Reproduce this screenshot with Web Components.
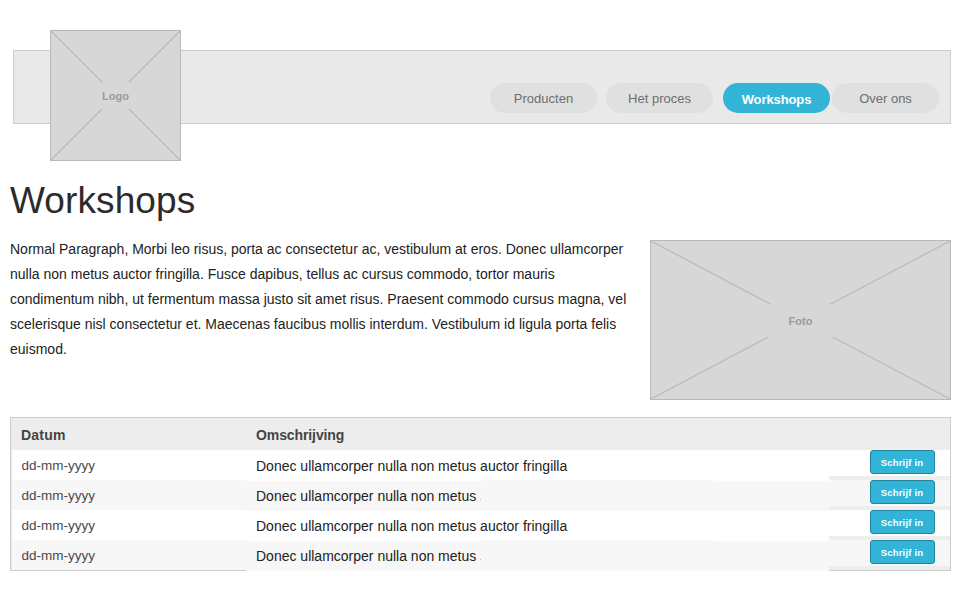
<!DOCTYPE html>
<html lang="nl">
<head>
<meta charset="utf-8">
<title>Workshops</title>
<style>
body { margin: 0; background: #fff; font-family: "Liberation Sans", Arial, sans-serif; }
</style>
</head>
<body>
<workshop-page></workshop-page>

<script>
class BaseElement extends HTMLElement {
  constructor() {
    super();
    this.attachShadow({ mode: "open" });
    const t = document.createElement("template");
    t.innerHTML = this.view();
    this.shadowRoot.append(t.content.cloneNode(true));
  }
  view() { return ""; }
}

/* Crossed box standing in for an image, with a centred label */
customElements.define("image-placeholder", class extends HTMLElement {
  connectedCallback() {
    const w = +this.getAttribute("w"), h = +this.getAttribute("h");
    const top = +this.getAttribute("gap-top"), bottom = +this.getAttribute("gap-bottom");
    this.attachShadow({ mode: "open" }).innerHTML = `
      <style>
        :host { display: grid; width: ${w}px; height: ${h}px; flex: none; }
        svg, span { grid-area: 1 / 1; }
        svg { display: block; }
        span { place-self: center; font: bold 11px/13px "Liberation Sans", Arial, sans-serif;
               color: #9b9b9b; padding-top: 2px; }
      </style>
      <svg width="${w}" height="${h}" fill="none" stroke="#b9b9b9">
        <rect x=".5" y=".5" width="${w - 1}" height="${h - 1}" fill="#d7d7d7"/>
        <path stroke-width="1.2" d="M1 1L${w - 1} ${h - 1}M${w - 1} 1L1 ${h - 1}"/>
        <rect x="${w * 0.35}" y="${top}" width="${w * 0.3}" height="${bottom - top}" fill="#d7d7d7" stroke="none"/>
      </svg>
      <span><slot></slot></span>`;
  }
});

customElements.define("nav-pill", class extends BaseElement {
  view() {
    return `<style>
      :host { display: flex; align-items: center; justify-content: center; box-sizing: border-box;
              width: 107px; height: 30px; border-radius: 15px; background: #e0e0e0; color: #6e6e6e;
              font-size: 13px; line-height: 16px; padding-top: 2px; }
      :host([active]) { background: #31b4d6; color: #fff; font-weight: bold; letter-spacing: -.1px;
              padding-top: 4px; }
    </style><slot></slot>`;
  }
});

customElements.define("site-header", class extends BaseElement {
  view() {
    return `<style>
      :host { display: flex; box-sizing: border-box; height: 74px; margin: 50px 9px 0 13px;
              border: 1px solid #cdcdcd; background: #e9e9e9; }
      .logo { margin: -21px 0 0 36px; height: 131px; }
      nav { display: flex; align-items: flex-start; margin: 32.4px 11px 0 auto; }
      .b { margin-left: 9px; } .c { margin-left: 10px; } .d { margin-left: 2px; }
    </style>
    <div class="logo"><image-placeholder w="131" h="131" gap-top="52" gap-bottom="79">Logo</image-placeholder></div>
    <nav>
      <nav-pill>Producten</nav-pill>
      <nav-pill class="b">Het proces</nav-pill>
      <nav-pill class="c" active>Workshops</nav-pill>
      <nav-pill class="d">Over ons</nav-pill>
    </nav>`;
  }
});

customElements.define("sign-up-button", class extends BaseElement {
  view() {
    return `<style>
      :host { display: block; box-sizing: border-box; width: 65px; height: 24px; border: 1px solid #20869f;
              border-radius: 3px; background: #31b4d6; color: #fff; text-align: center; padding-right: 1px;
              font: bold 9.5px/23px "Liberation Sans", Arial, sans-serif; letter-spacing: .2px; }
    </style><slot></slot>`;
  }
});

customElements.define("workshop-row", class extends BaseElement {
  view() {
    return `<style>
      :host { display: grid; grid-template: 30px / 235px 583px 121px; height: 30px; --bg: #fff; }
      :host([alt]) { --bg: #f7f7f7; }
      .date { margin-left: 1px; padding-left: 9.5px; background: var(--bg); color: #4a4a4a;
              font-size: 13.5px; line-height: 31px; }
      .desc { height: 31px; padding-left: 10px; color: #222; font-size: 14px; line-height: 33px;
              background: linear-gradient(var(--bg), var(--bg)) 0 1px / 100% 30px no-repeat; }
      :host([first]) .desc { background: var(--bg); }
      :host([alt]) .desc { background:
              linear-gradient(#f7f7f7, #f7f7f7) 235px 0 / 234px 1px no-repeat,
              linear-gradient(#bbb, #bbb) 234px 19px / 1px 1px no-repeat,
              linear-gradient(#fff, #fff) 0 0 / 100% 1px no-repeat, #f7f7f7; }
      .action { height: 26px; background: var(--bg); padding-left: 41px; }
    </style>
    <div class="date"><slot name="date"></slot></div>
    <div class="desc"><slot></slot></div>
    <div class="action"><sign-up-button>Schrijf in</sign-up-button></div>`;
  }
});

customElements.define("workshop-table", class extends BaseElement {
  view() {
    return `<style>
      :host { display: block; box-sizing: border-box; width: 941px; height: 154px;
              border: 1px solid #cdcdcd; background: #ededed; }
      header { display: grid; grid-template-columns: 235px 1fr; height: 32px;
               font-weight: bold; font-size: 14px; line-height: 34px; color: #444; }
      header span { padding-left: 10px; }
      .d { letter-spacing: .2px; }
      .o { letter-spacing: -.1px; }
    </style>
    <header><span class="d">Datum</span><span class="o">Omschrijving</span></header>
    <slot></slot>`;
  }
});

customElements.define("workshop-page", class extends BaseElement {
  view() {
    return `<style>
      :host { display: flow-root; width: 960px; height: 594px; overflow: hidden; }
      h1 { margin: 56px 0 0 10px; font-size: 37px; font-weight: normal; line-height: 42px;
           letter-spacing: .1px; color: #2b2b2b; }
      .intro { display: flex; justify-content: space-between; margin: 18px 9px 0 10px; height: 160px; }
      p { margin: -3px 0 0; font-size: 14px; line-height: 25px; color: #222; white-space: nowrap; }
      workshop-table { margin: 17px 0 0 10px; }
    </style>
    <site-header></site-header>
    <h1>Workshops</h1>
    <section class="intro">
      <p>Normal Paragraph, Morbi leo risus, porta ac consectetur ac, vestibulum at eros. Donec ullamcorper<br>
      nulla non metus auctor fringilla. Fusce dapibus, tellus ac cursus commodo, tortor mauris<br>
      condimentum nibh, ut fermentum massa justo sit amet risus. Praesent commodo cursus magna, vel<br>
      scelerisque nisl consectetur et. Maecenas faucibus mollis interdum. Vestibulum id ligula porta felis<br>
      euismod.</p>
      <image-placeholder w="301" h="160" gap-top="64" gap-bottom="97">Foto</image-placeholder>
    </section>
    <workshop-table>
      <workshop-row first><span slot="date">dd-mm-yyyy</span>Donec ullamcorper nulla non metus auctor fringilla</workshop-row>
      <workshop-row alt><span slot="date">dd-mm-yyyy</span>Donec ullamcorper nulla non metus</workshop-row>
      <workshop-row><span slot="date">dd-mm-yyyy</span>Donec ullamcorper nulla non metus auctor fringilla</workshop-row>
      <workshop-row alt><span slot="date">dd-mm-yyyy</span>Donec ullamcorper nulla non metus</workshop-row>
    </workshop-table>`;
  }
});
</script>
</body>
</html>
